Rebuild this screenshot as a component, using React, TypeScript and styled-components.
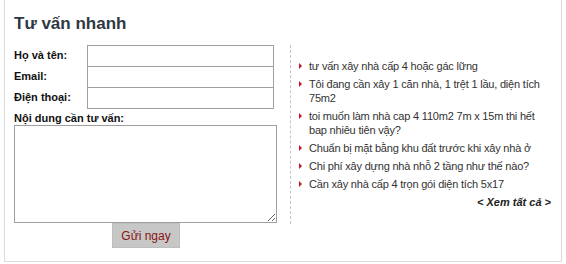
import * as React from "react";
import styled, { createGlobalStyle } from "styled-components";

const Global = createGlobalStyle`
  html, body { margin: 0; padding: 0; background: #fff; }
  body { font-family: "Liberation Sans", Arial, sans-serif; color: #333; }
`;

const Box = styled.div`
  margin-left: 4px;
  width: 556px;
  height: 261px;
  border: 1px solid #dcdcdc;
  border-top: none;
`;

const Title = styled.h2`
  margin: 0;
  padding: 14px 0 0 9px;
  height: 33px;
  box-sizing: border-box;
  font-size: 17px;
  font-weight: bold;
  color: #2f3842;
  line-height: 20px;
`;

const Body = styled.div`
  display: flex;
  padding-top: 12px;
`;

const FormCol = styled.div`
  width: 272px;
  padding-left: 9px;
  display: flex;
  flex-direction: column;
`;

const Row = styled.div`
  display: flex;
  align-items: flex-start;
  height: 21px;
`;

const Label = styled.label`
  width: 73px;
  font-size: 11px;
  font-weight: bold;
  line-height: 21px;
  color: #111;
`;

const Input = styled.input<{ $last?: boolean }>`
  width: 187px;
  height: ${(p) => (p.$last ? "22px" : "21px")};
  box-sizing: border-box;
  border: 1px solid #a0a0a0;
  border-bottom: ${(p) => (p.$last ? "1px solid #a0a0a0" : "none")};
  margin: 0;
  padding: 2px;
`;

const AreaLabel = styled(Label)`
  width: auto;
  margin-top: 3px;
  line-height: 14px;
`;

const Area = styled.textarea`
  width: 263px;
  height: 98px;
  box-sizing: border-box;
  border: 1px solid #a0a0a0;
  margin: 0;
  resize: both;
`;

const Submit = styled.button`
  align-self: flex-start;
  margin: 0 0 0 98px;
  width: 68px;
  height: 25px;
  border: 1px solid #bebebe;
  background: #c7c7c7;
  color: #8a1414;
  font-family: inherit;
  font-size: 12px;
  padding: 0;
`;

const ListCol = styled.div`
  margin-left: 4px;
  border-left: 1px dashed #c4c4c4;
  height: 165px;
  padding: 14px 0 0 8px;
  width: 252px;
`;

const List = styled.ul`
  list-style: none;
  margin: 0;
  padding: 0;
`;

const Item = styled.li`
  position: relative;
  padding-left: 10px;
  margin-bottom: 4px;
  font-size: 11px;
  letter-spacing: -0.2px;
  line-height: 14px;
  color: #333;
  &::before {
    content: "";
    position: absolute;
    left: 0;
    top: 4px;
    border-left: 3px solid #c4161c;
    border-top: 3px solid transparent;
    border-bottom: 3px solid transparent;
  }
`;

const More = styled.a`
  display: block;
  text-align: right;
  font-size: 11px;
  line-height: 14px;
  font-weight: bold;
  font-style: italic;
  color: #222;
  margin-top: 1px;
  text-decoration: none;
`;

const fields = ["Họ và tên:", "Email:", "Điện thoại:"];

const items = [
  "tư vấn xây nhà cấp 4 hoặc gác lững",
  "Tôi đang cần xây 1 căn nhà, 1 trệt 1 lầu, diện tích 75m2",
  "toi muốn làm nhà cap 4 110m2 7m x 15m thi hết bap nhiêu tiên vậy?",
  "Chuẩn bị mặt bằng khu đất trước khi xây nhà ở",
  "Chi phí xây dựng nhà nhỗ 2 tầng như thế nào?",
  "Cần xây nhà cấp 4 trọn gói diện tích 5x17",
];

export default function App() {
  return (
    <>
      <Global />
      <Box>
        <Title>Tư vấn nhanh</Title>
        <Body>
          <FormCol>
            {fields.map((f, i) => (
              <Row key={f}>
                <Label>{f}</Label>
                <Input $last={i === fields.length - 1} />
              </Row>
            ))}
            <AreaLabel>Nội dung cần tư vấn:</AreaLabel>
            <Area />
            <Submit>Gửi ngay</Submit>
          </FormCol>
          <ListCol>
            <List>
              {items.map((t) => (
                <Item key={t}>{t}</Item>
              ))}
            </List>
            <More href="#">&lt; Xem tất cả &gt;</More>
          </ListCol>
        </Body>
      </Box>
    </>
  );
}
